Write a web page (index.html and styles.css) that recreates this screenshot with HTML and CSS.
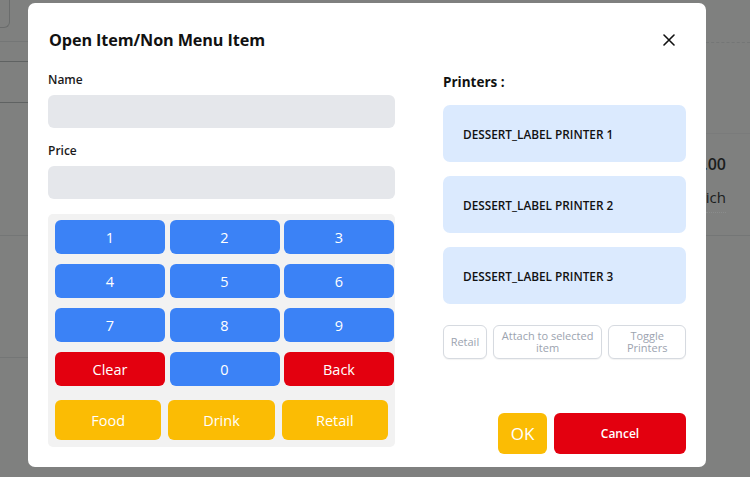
FILE: index.html
```html
<!DOCTYPE html>
<html lang="en">
<head>
<meta charset="utf-8">
<title>Open Item</title>
<link rel="stylesheet" href="styles.css">
</head>
<body>
<div class="page">
  <div class="page-left">
    <div class="pl-top"><div class="pl-box"></div></div>
    <div class="pl-row pl-r1"></div>
    <div class="pl-row pl-r2"></div>
    <div class="pl-row pl-r3"></div>
    <div class="pl-row pl-r4"></div>
  </div>
  <div class="page-right">
    <div class="pr-top"></div>
    <div class="pr-gap"></div>
    <div class="pr-item">
      <div class="pr-price">$10.00</div>
      <div class="pr-name">Sandwich</div>
      <div class="pr-dots"></div>
    </div>
  </div>
</div>

<div class="modal">
  <div class="modal-head">
    <h1 class="modal-title">Open Item/Non Menu Item</h1>
    <button class="close" aria-label="Close">
      <svg width="12" height="12" viewBox="0 0 12 12"><path d="M1 1L11 11M11 1L1 11" stroke="#111" stroke-width="1.6" fill="none" stroke-linecap="round"/></svg>
    </button>
  </div>
  <div class="modal-body">
    <div class="col-left">
      <label class="field-label">Name</label>
      <div class="field-input"></div>
      <label class="field-label price-label">Price</label>
      <div class="field-input"></div>
      <div class="keypad">
        <div class="keys">
          <button class="key blue">1</button>
          <button class="key blue">2</button>
          <button class="key blue">3</button>
          <button class="key blue">4</button>
          <button class="key blue">5</button>
          <button class="key blue">6</button>
          <button class="key blue">7</button>
          <button class="key blue">8</button>
          <button class="key blue">9</button>
          <button class="key red">Clear</button>
          <button class="key blue">0</button>
          <button class="key red">Back</button>
        </div>
        <div class="cats">
          <button class="cat">Food</button>
          <button class="cat">Drink</button>
          <button class="cat">Retail</button>
        </div>
      </div>
    </div>
    <div class="col-right">
      <div class="printers-label">Printers :</div>
      <div class="printer">DESSERT_LABEL PRINTER 1</div>
      <div class="printer">DESSERT_LABEL PRINTER 2</div>
      <div class="printer">DESSERT_LABEL PRINTER 3</div>
      <div class="opts">
        <button class="opt opt-retail">Retail</button>
        <button class="opt opt-attach">Attach to selected item</button>
        <button class="opt opt-toggle">Toggle Printers</button>
      </div>
      <div class="actions">
        <button class="ok">OK</button>
        <button class="cancel">Cancel</button>
      </div>
    </div>
  </div>
</div>
</body>
</html>
```

FILE: styles.css
```css
* { box-sizing: border-box; }
html, body { margin: 0; padding: 0; }
body {
  width: 750px;
  height: 477px;
  overflow: hidden;
  background: #7f807f;
  font-family: "Open Sans", "Noto Sans", sans-serif;
  position: relative;
}
button { font-family: inherit; border: none; cursor: pointer; }

/* background page (dimmed) */
.page { display: flex; justify-content: space-between; height: 477px; }
.page-left { width: 28px; }
.pl-top { height: 42px; border-bottom: 1px solid #747676; }
.pl-box { width: 10px; height: 28px; border: 1px solid #6a6c6c; border-top: none; border-left: none; border-radius: 0 0 6px 0; }
.pl-r1 { height: 20px; border-bottom: 1px solid #5f6262; }
.pl-r2 { height: 41px; border-bottom: 1px solid #5f6262; }
.pl-r3 { height: 133px; border-bottom: 1px solid #747676; }
.pl-r4 { height: 122px; border-bottom: 1px solid #747676; }
.page-right { width: 44px; }
.pr-top { height: 43px; border-bottom: 1px dashed #747676; }
.pr-gap { height: 91px; border-bottom: 1px solid #7a7b7b; }
.pr-item { height: 102px; border-bottom: 1px solid #747676; display: flex; flex-direction: column; align-items: flex-end; padding-right: 24px; }
.pr-price { margin-top: 20px; font-size: 16px; font-weight: 600; color: #1b1d1d; white-space: nowrap; line-height: 20px; }
.pr-name { margin-top: 13px; font-size: 15px; font-weight: 500; color: #1b1d1d; white-space: nowrap; line-height: 20px; }
.pr-dots { margin-top: 5px; width: 20px; border-bottom: 1px dotted #8a8c8c; align-self: flex-start; }

/* modal */
.modal {
  position: absolute;
  left: 28px;
  top: 3px;
  width: 678px;
  height: 464px;
  background: #fff;
  border-radius: 7px;
  padding: 0 20px 20px 20px;
  display: flex;
  flex-direction: column;
}
.modal-head {
  display: flex;
  align-items: center;
  justify-content: space-between;
  height: 68px;
  padding-top: 6px;
}
.modal-title {
  margin: 0 0 0 1px;
  font-size: 16.2px;
  font-weight: 700;
  color: #111;
  letter-spacing: -0.1px;
}
.close {
  background: none;
  width: 24px;
  height: 24px;
  padding: 0;
  margin-right: 5px;
  display: flex;
  align-items: center;
  justify-content: center;
}
.modal-body { display: flex; gap: 48px; flex: 1; }

.col-left { width: 347px; display: flex; flex-direction: column; }
.field-label {
  font-size: 12px;
  font-weight: 600;
  color: #1a1a1a;
  line-height: 18px;
  margin-top: 0;
  margin-bottom: 6px;
}
.price-label { margin-top: 14px; margin-bottom: 6px; }
.field-input { height: 33px; background: #e5e7eb; border-radius: 6px; }
.keypad {
  margin-top: 15px;
  background: #f2f2f2;
  border-radius: 5px;
  padding: 6px 1px 7px 7px;
}
.keys {
  display: grid;
  grid-template-columns: repeat(3, 1fr);
  column-gap: 4.5px;
  row-gap: 10px;
}
.key {
  height: 34px;
  border-radius: 6px;
  color: #fff;
  font-size: 14.5px;
  font-weight: 500;
}
.blue { background: #3b82f6; }
.red { background: #e3000f; }
.cats {
  margin-top: 14px;
  margin-right: 6px;
  display: grid;
  grid-template-columns: repeat(3, 1fr);
  column-gap: 7px;
}
.cat {
  height: 40px;
  border-radius: 6px;
  background: #fbbc04;
  color: #fff;
  font-size: 14.5px;
  font-weight: 500;
}

.col-right { width: 243px; display: flex; flex-direction: column; margin-bottom: -7px; }
.printers-label {
  font-size: 13.5px;
  font-weight: 700;
  color: #111;
  line-height: 18px;
  margin-top: 2px;
  margin-bottom: 14px;
}
.printer {
  height: 57px;
  background: #dbeafe;
  border-radius: 7px;
  margin-bottom: 14px;
  display: flex;
  align-items: center;
  padding-left: 20px;
  font-size: 11.8px;
  font-weight: 600;
  color: #111;
}
.opts { display: flex; gap: 6px; margin-top: 7px; }
.opt {
  height: 34px;
  background: #fff;
  border: 1px solid #d6dae0;
  border-radius: 6px;
  color: #9ca3af;
  font-size: 11px;
  font-weight: 500;
  line-height: 12.5px;
  padding: 0 2px;
  box-shadow: 0 1px 1px rgba(0,0,0,0.05);
}
.opt-retail { width: 44px; }
.opt-attach { width: 110px; }
.opt-toggle { width: 78px; }
.actions { margin-top: auto; display: flex; justify-content: flex-end; gap: 7px; }
.ok {
  width: 49px;
  height: 41px;
  border-radius: 6px;
  background: #fbbc04;
  color: #fff;
  font-size: 17px;
  font-weight: 500;
}
.cancel {
  width: 132px;
  height: 41px;
  border-radius: 6px;
  background: #e3000f;
  color: #fff;
  font-size: 12px;
  font-weight: 600;
}
```
